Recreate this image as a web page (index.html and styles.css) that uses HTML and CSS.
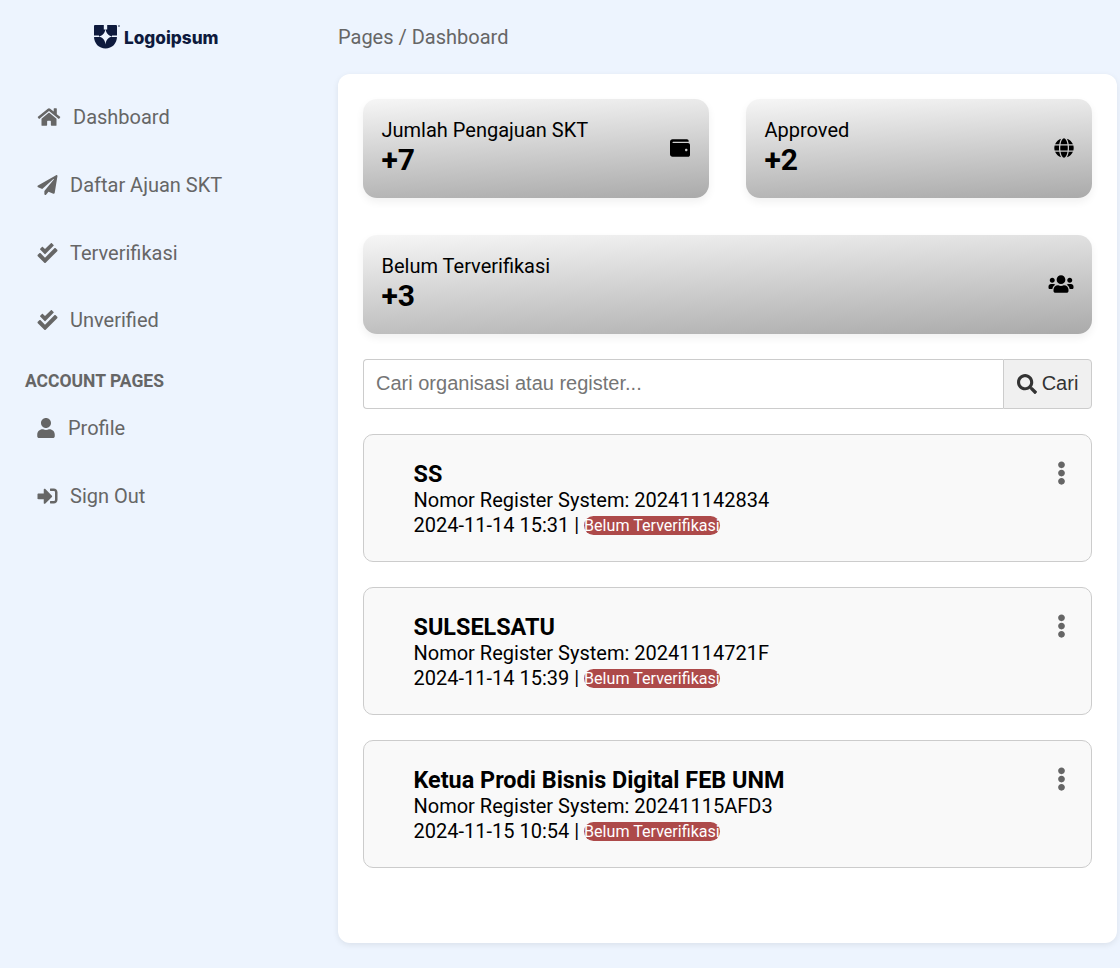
FILE: index.html
```html
<!DOCTYPE html>
<html lang="id">
<head>
<meta charset="utf-8">
<title>Dashboard</title>
<link rel="stylesheet" href="styles.css">
</head>
<body>
<aside class="sidebar">
  <div class="logo">
    <svg class="logo-mark" viewBox="0 0 26 24"><path d="M0 1a1 1 0 0 1 1-1h21a1 1 0 0 1 1 1v10.500C23 18.500 18 23.500 11.500 23.500S0 18.500 0 11.500z" fill="#0e1a3d"/><path d="M9.800 0h3.400v4.500h-3.400z" fill="#edf4fe"/><path d="M11.500 3.500c.6 4.800 2.800 7.300 7.500 8-4.700.7-6.900 3.200-7.500 8-.6-4.800-2.800-7.300-7.500-8 4.700-.7 6.900-3.200 7.500-8z" fill="#edf4fe"/><path d="M0 10.400h5v1.600H0zM18 10.400h5v1.600h-5z" fill="#edf4fe"/><circle cx="25" cy="1" r=".8" fill="#0e1a3d"/></svg>
    <span class="logo-text">Logoipsum</span>
  </div>
  <nav class="nav">
    <a class="nav-item"><svg class="ico ico-home" viewBox="0 0 576 512"><path d="M280.37 148.26L96 300.11V464a16 16 0 0 0 16 16l112.06-.29a16 16 0 0 0 15.92-16V368a16 16 0 0 1 16-16h64a16 16 0 0 1 16 16v95.64a16 16 0 0 0 16 16.05L464 480a16 16 0 0 0 16-16V300L295.67 148.26a12.19 12.19 0 0 0-15.3 0zM571.6 251.47L488 182.56V44.05a12 12 0 0 0-12-12h-56a12 12 0 0 0-12 12v72.61L318.47 43a48 48 0 0 0-61 0L4.34 251.47a12 12 0 0 0-1.6 16.9l25.5 31A12 12 0 0 0 45.15 301l235.22-193.74a12.19 12.19 0 0 1 15.3 0L530.9 301a12 12 0 0 0 16.9-1.6l25.5-31a12 12 0 0 0-1.7-16.93z"/></svg><span>Dashboard</span></a>
    <a class="nav-item"><svg class="ico" viewBox="0 0 512 512"><path d="M476 3.2L12.5 270.6c-18.1 10.4-15.8 35.6 2.2 43.2L121 358.4l287.3-253.2c5.5-4.9 13.3 2.6 8.6 8.3L176 407v80.5c0 23.6 28.5 32.9 42.5 15.8L282 426l124.6 52.2c14.2 6 30.4-2.9 33-18.2l72-432C515 7.8 493.3-6.8 476 3.2z"/></svg><span>Daftar Ajuan SKT</span></a>
    <a class="nav-item"><svg class="ico" viewBox="0 0 512 512"><path d="M505 174.8l-39.6-39.6c-9.4-9.4-24.6-9.4-33.9 0L192 374.7 80.6 263.2c-9.4-9.4-24.6-9.4-33.9 0L7 302.9c-9.4 9.4-9.4 24.6 0 34L175 505c9.4 9.4 24.6 9.4 33.9 0l296-296.2c9.4-9.5 9.4-24.7.1-34zm-324.3 106c6.2 6.3 16.4 6.3 22.6 0l208-208.2c6.2-6.3 6.2-16.4 0-22.6L366.1 4.7c-6.2-6.3-16.4-6.3-22.6 0L192 156.2l-55.4-55.5c-6.2-6.3-16.4-6.3-22.6 0L68.700 146c-6.2 6.3-6.2 16.4 0 22.6l112 112.2z"/></svg><span>Terverifikasi</span></a>
    <a class="nav-item"><svg class="ico" viewBox="0 0 512 512"><path d="M505 174.8l-39.6-39.6c-9.4-9.4-24.6-9.4-33.9 0L192 374.7 80.6 263.2c-9.4-9.4-24.6-9.4-33.9 0L7 302.9c-9.4 9.4-9.4 24.6 0 34L175 505c9.4 9.4 24.6 9.4 33.9 0l296-296.2c9.4-9.5 9.4-24.7.1-34zm-324.3 106c6.2 6.3 16.4 6.3 22.6 0l208-208.2c6.2-6.3 6.2-16.4 0-22.6L366.1 4.7c-6.2-6.3-16.4-6.3-22.6 0L192 156.2l-55.4-55.5c-6.2-6.3-16.4-6.3-22.6 0L68.700 146c-6.2 6.3-6.2 16.4 0 22.6l112 112.2z"/></svg><span>Unverified</span></a>
    <div class="nav-heading">ACCOUNT PAGES</div>
    <a class="nav-item"><svg class="ico ico-user" viewBox="0 0 448 512"><path d="M224 256c70.7 0 128-57.3 128-128S294.700 0 224 0 96 57.300 96 128s57.300 128 128 128zm89.600 32h-16.700c-22.200 10.200-46.900 16-72.900 16s-50.600-5.800-72.900-16h-16.700C60.200 288 0 348.200 0 422.400V464c0 26.500 21.500 48 48 48h352c26.500 0 48-21.500 48-48v-41.600c0-74.200-60.200-134.400-134.400-134.400z"/></svg><span>Profile</span></a>
    <a class="nav-item"><svg class="ico" viewBox="0 0 512 512"><path d="M416 448h-84c-6.600 0-12-5.400-12-12v-40c0-6.600 5.400-12 12-12h84c17.700 0 32-14.300 32-32V160c0-17.700-14.300-32-32-32h-84c-6.600 0-12-5.400-12-12V76c0-6.600 5.400-12 12-12h84c53 0 96 43 96 96v192c0 53-43 96-96 96zm-47-201L201 79c-15-15-41-4.500-41 17v96H24c-13.300 0-24 10.700-24 24v96c0 13.300 10.700 24 24 24h136v96c0 21.500 26 32 41 17l168-168c9.300-9.400 9.300-24.600 0-34z"/></svg><span>Sign Out</span></a>
  </nav>
</aside>
<main class="main">
  <div class="crumb">Pages / Dashboard</div>
  <section class="panel">
    <div class="stats">
      <div class="stat">
        <div class="stat-body"><div class="stat-label">Jumlah Pengajuan SKT</div><div class="stat-value">+7</div></div>
        <svg class="stat-ico" viewBox="0 0 512 512"><path d="M461.200 128H80c-8.840 0-16-7.160-16-16s7.160-16 16-16h384c8.840 0 16-7.160 16-16 0-26.510-21.490-48-48-48H64C28.650 32 0 60.650 0 96v320c0 35.350 28.650 64 64 64h397.200c28.020 0 50.800-21.530 50.800-48V176c0-26.470-22.780-48-50.800-48zM416 336c-17.670 0-32-14.330-32-32s14.330-32 32-32 32 14.330 32 32-14.330 32-32 32z"/></svg>
      </div>
      <div class="stat">
        <div class="stat-body"><div class="stat-label">Approved</div><div class="stat-value">+2</div></div>
        <svg class="stat-ico" viewBox="0 0 496 512"><path d="M336.500 160C322 70.700 287.800 8 248 8s-74 62.700-88.500 152h177zM152 256c0 22.200 1.200 43.500 3.300 64h185.300c2.100-20.500 3.300-41.800 3.300-64s-1.200-43.500-3.300-64H155.300c-2.100 20.500-3.300 41.800-3.300 64zm324.700-96c-28.600-67.900-86.500-120.400-158-141.600 24.400 33.800 41.200 84.700 50 141.600h108zM177.200 18.400C105.800 39.600 47.800 92.100 19.300 160h108c8.700-56.900 25.500-107.800 49.900-141.600zM487.400 192H372.700c2.100 21 3.300 42.500 3.300 64s-1.200 43-3.300 64h114.600c5.500-20.500 8.600-41.800 8.600-64s-3.100-43.500-8.500-64zM120 256c0-21.500 1.200-43 3.300-64H8.600C3.200 212.500 0 233.800 0 256s3.200 43.500 8.600 64h114.600c-2-21-3.200-42.500-3.200-64zm39.500 96c14.500 89.300 48.700 152 88.500 152s74-62.700 88.500-152h-177zm159.300 141.600c71.400-21.200 129.400-73.700 158-141.600h-108c-8.800 56.900-25.600 107.800-50 141.600zM19.300 352c28.600 67.900 86.500 120.400 158 141.600-24.400-33.800-41.200-84.700-50-141.600h-108z"/></svg>
      </div>
      <div class="stat stat-wide">
        <div class="stat-body"><div class="stat-label">Belum Terverifikasi</div><div class="stat-value">+3</div></div>
        <svg class="stat-ico stat-ico-users" viewBox="0 0 640 512"><path d="M96 224c35.300 0 64-28.700 64-64s-28.700-64-64-64-64 28.700-64 64 28.700 64 64 64zm448 0c35.300 0 64-28.700 64-64s-28.700-64-64-64-64 28.700-64 64 28.700 64 64 64zm32 32h-64c-17.600 0-33.500 7.100-45.100 18.600 40.300 22.100 68.900 62 75.100 109.400h66c17.700 0 32-14.300 32-32v-32c0-35.300-28.700-64-64-64zm-256 0c61.900 0 112-50.100 112-112S381.900 32 320 32 208 82.100 208 144s50.100 112 112 112zm76.800 32h-8.300c-20.800 10-43.900 16-68.500 16s-47.600-6-68.500-16h-8.300C179.600 288 128 339.600 128 403.200V432c0 26.500 21.500 48 48 48h288c26.500 0 48-21.500 48-48v-28.800c0-63.600-51.600-115.200-115.200-115.200zm-223.700-13.400C161.500 263.100 145.600 256 128 256H64c-35.300 0-64 28.700-64 64v32c0 17.700 14.300 32 32 32h65.900c6.300-47.400 34.900-87.300 75.200-109.400z"/></svg>
      </div>
    </div>
    <form class="search">
      <input class="search-input" type="text" placeholder="Cari organisasi atau register...">
      <button class="search-btn" type="button"><svg class="search-ico" viewBox="0 0 512 512"><path d="M505 442.700L405.300 343c-4.500-4.500-10.600-7-17-7H372c27.600-35.300 44-79.700 44-128C416 93.100 322.900 0 208 0S0 93.100 0 208s93.100 208 208 208c48.300 0 92.700-16.400 128-44v16.300c0 6.400 2.500 12.500 7 17l99.700 99.700c9.400 9.400 24.600 9.400 33.900 0l28.300-28.300c9.400-9.400 9.400-24.600.1-34zM208 336c-70.700 0-128-57.200-128-128 0-70.700 57.200-128 128-128 70.700 0 128 57.200 128 128 0 70.700-57.200 128-128 128z"/></svg>Cari</button>
    </form>
    <div class="list">
      <article class="item">
        <div class="item-body">
          <div class="item-title">SS</div>
          <div class="item-line">Nomor Register System: 202411142834</div>
          <div class="item-line">2024-11-14 15:31 | <span class="badge">Belum Terverifikasi</span></div>
        </div>
        <svg class="kebab" viewBox="0 0 192 512"><path d="M96 184c39.800 0 72 32.200 72 72s-32.200 72-72 72-72-32.200-72-72 32.200-72 72-72zM24 80c0 39.800 32.200 72 72 72s72-32.200 72-72S135.800 8 96 8 24 40.200 24 80zm0 352c0 39.800 32.200 72 72 72s72-32.200 72-72-32.200-72-72-72-72 32.200-72 72z"/></svg>
      </article>
      <article class="item">
        <div class="item-body">
          <div class="item-title">SULSELSATU</div>
          <div class="item-line">Nomor Register System: 20241114721F</div>
          <div class="item-line">2024-11-14 15:39 | <span class="badge">Belum Terverifikasi</span></div>
        </div>
        <svg class="kebab" viewBox="0 0 192 512"><path d="M96 184c39.800 0 72 32.200 72 72s-32.200 72-72 72-72-32.200-72-72 32.200-72 72-72zM24 80c0 39.800 32.200 72 72 72s72-32.200 72-72S135.800 8 96 8 24 40.200 24 80zm0 352c0 39.800 32.200 72 72 72s72-32.200 72-72-32.200-72-72-72-72 32.200-72 72z"/></svg>
      </article>
      <article class="item">
        <div class="item-body">
          <div class="item-title">Ketua Prodi Bisnis Digital FEB UNM</div>
          <div class="item-line">Nomor Register System: 20241115AFD3</div>
          <div class="item-line">2024-11-15 10:54 | <span class="badge">Belum Terverifikasi</span></div>
        </div>
        <svg class="kebab" viewBox="0 0 192 512"><path d="M96 184c39.800 0 72 32.200 72 72s-32.200 72-72 72-72-32.200-72-72 32.200-72 72-72zM24 80c0 39.800 32.200 72 72 72s72-32.200 72-72S135.800 8 96 8 24 40.200 24 80zm0 352c0 39.800 32.200 72 72 72s72-32.200 72-72-32.200-72-72-72-72 32.200-72 72z"/></svg>
      </article>
    </div>
  </section>
</main>
</body>
</html>
```
FILE: styles.css
```css
* { box-sizing: border-box; }
html, body { margin: 0; height: 100%; }
body {
  display: flex;
  height: 968px;
  overflow: hidden;
  background: #edf4fe;
  font-family: Roboto, "Liberation Sans", sans-serif;
  font-size: 20px;
  color: #000;
}
.sidebar { width: 338px; flex: none; padding-top: 25px; }
.logo { display: flex; align-items: center; gap: 4px; padding-left: 94px; height: 24px; }
.logo-mark { width: 26px; height: 24px; flex: none; }
.logo-text { font-family: Inter, sans-serif; font-weight: 800; font-size: 17.200px; letter-spacing: 0; color: #0e1a3d; }
.nav { display: flex; flex-direction: column; padding-top: 34.400px; }
.nav-item { display: flex; align-items: center; gap: 12px; height: 67.700px; padding-left: 37px; color: #666; }
.ico { width: 21px; height: 20px; flex: none; fill: #666; }
.ico-home { width: 24px; }
.ico-user { width: 18px; margin-right: 1px; }
.nav-heading { font-weight: 700; font-size: 17.500px; color: #666; padding-left: 25px; height: 24px; line-height: 24px; margin-top: 14.800px; margin-bottom: 1.400px; }
.main { flex: 1; padding-right: 3px; min-width: 0; }
.crumb { height: 74px; line-height: 74px; color: #666; }
.panel { height: 869px; background: #fff; border-radius: 12px; padding: 25px; box-shadow: 0 2px 6px rgba(0, 0, 0, .08); }
.stats { display: grid; grid-template-columns: 1fr 1fr; gap: 37px; }
.stat {
  display: flex; align-items: center; justify-content: space-between;
  height: 99px; padding: 0 18px 2px 18.500px;
  border-radius: 14px;
  background: linear-gradient(177deg, #f6f6f6, #aaa);
  box-shadow: 0 4px 8px rgba(0, 0, 0, .06);
}
.stat:first-child { padding-right: 19px; }
.stat-wide { grid-column: 1 / 3; }
.stat-label { line-height: 24px; }
.stat-value { font-weight: 700; font-size: 30px; line-height: 36px; }
.stat-ico { width: 20px; height: 20px; flex: none; }
.stat-ico-users { width: 26px; }
.search { display: flex; height: 50px; margin-top: 25px; }
.search-input {
  flex: 1; min-width: 0; height: 50px; padding: 0 12px 2px;
  border: 1px solid #ccc; border-right: 0; border-radius: 4px 0 0 4px;
  font: 20px "Liberation Sans", Arial, sans-serif; background: #fff; outline: none;
}
.search-input::placeholder { color: #757575; opacity: 1; }
.search-btn {
  width: 89px; height: 50px; padding: 0 0 1px;
  display: flex; align-items: center; justify-content: center; gap: 5px;
  border: 1px solid #ccc; border-radius: 0 4px 4px 0;
  background: #f0f0f0; font: 20px "Liberation Sans", Arial, sans-serif; color: #333;
}
.search-ico { width: 20px; height: 20px; fill: #333; }
.list { display: flex; flex-direction: column; gap: 25px; margin-top: 25px; }
.item {
  display: flex; justify-content: space-between; align-items: flex-start;
  height: 128px; padding: 26px 25px 0 49.500px;
  background: #f9f9f9; border: 1px solid #ccc; border-radius: 10px;
}
.item-title { font-weight: 700; font-size: 23.400px; line-height: 27px; }
.item-line { line-height: 25px; }
.badge { font-size: 16.100px; color: #fff; background: #ad4a4a; border-radius: 10px; vertical-align: 1px; }
.kebab { width: 9px; height: 24px; flex: none; fill: #666; }
```
